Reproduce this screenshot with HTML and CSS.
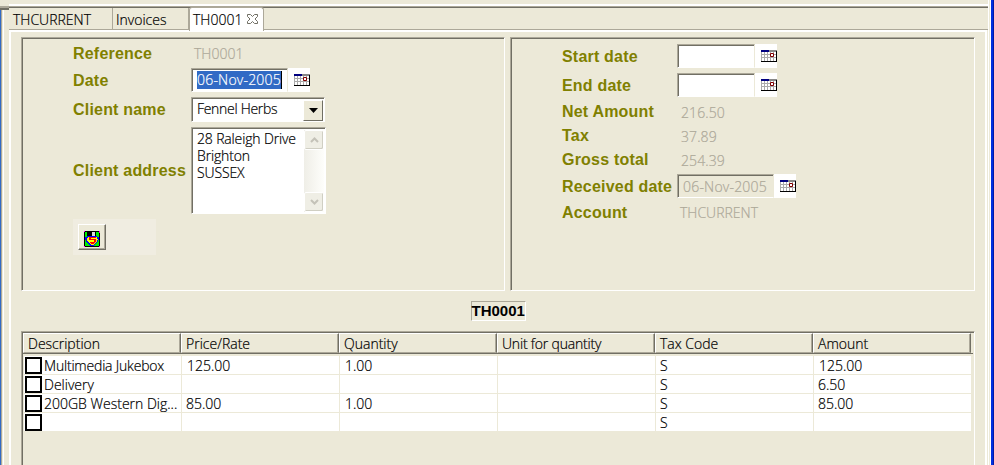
FILE: index.html
```html
<!DOCTYPE html>
<html lang="en">
<head>
<meta charset="utf-8">
<title>TH0001</title>
<link rel="stylesheet" href="styles.css">
</head>
<body>
<svg class="defs" width="0" height="0" shape-rendering="crispEdges">
<symbol id="cal" viewBox="0 0 16 12">
<path fill="#fff" d="M0 0h16v12H0z"/>
<path stroke="#aaa" fill="none" d="M.5 2v9M3.500 2v9M6.500 2v9M9.500 2v9M12.500 2v9M0 4.500h15M0 7.500h15"/>
<path fill="#000080" d="M0 0h8v2H0z"/><path fill="#888" d="M8 0h8v2H8z"/>
<path fill="#000" d="M15 1h1v11H0v-1h15z"/>
<path fill="#fff" stroke="#800000" d="M9.500 3.500h3v3h-3z"/>
</symbol>
</svg>
<div class="window">
<div class="edge-left"></div>
<main class="view">
<nav class="tabs">
<div class="tab t1"><span>THCURRENT</span></div>
<div class="tab t2"><span>Invoices</span></div>
<div class="tab active"><span>TH0001</span>
<svg width="11" height="10" viewBox="0 0 11 10"><path d="M.5.5h3l2 2 2-2h3v2L8 5l2.500 2.500v2h-3l-2-2-2 2h-3v-2L3 5 .5 2.500z" fill="#fff" stroke="#716f64"/></svg></div>
</nav>
<div class="editor">
<div class="panels">
<section class="panel left">
<div class="row r-ref"><label>Reference</label><span class="ro sp-ref">TH0001</span></div>
<div class="row r-date"><label class="low">Date</label><div class="date w-date"><div class="input"><span class="sel">06-Nov-2005</span></div><svg class="cal"><use href="#cal"/></svg></div></div>
<div class="row r-name"><label class="low">Client name</label><div class="combo"><span>Fennel Herbs</span><div class="drop"><svg width="9" height="5" viewBox="0 0 9 5"><path d="M0 0h9L4.500 5z"/></svg></div></div></div>
<div class="row r-addr"><label>Client address</label><div class="area"><div><p>28 Raleigh Drive</p><p>Brighton</p><p>SUSSEX</p></div>
<div class="scroll"><div class="sb"><svg width="9" height="6" viewBox="0 0 9 6"><path d="M1 5l3.500-3.500L8 5"/></svg></div><div class="sb"><svg width="9" height="6" viewBox="0 0 9 6"><path d="M1 1l3.500 3.500L8 1"/></svg></div></div></div></div>
<div class="toolbar"><button type="button"><svg width="16" height="16" viewBox="0 0 16 16" shape-rendering="crispEdges"><path fill="#000" d="M0 0h16v16H0z"/><path fill="#0e0" d="M1 1h14v14H1z"/><path fill="#000" d="M3 0h9v5H3z"/><path fill="#ddd" d="M8 1h3v4H8z"/><path fill="#00f" d="M3 5h10v1h2v3h-1v2h-1v1h-1v1h-1v1h-1v1H6v-1H5v-1H4v-1H3v-1H2V9H1V6h2z"/><path fill="#ff0" d="M4 6h9v2h1v1h-1v2h-1v1h-1v1h-1v1H7v-1H6v-1H5v-1H4v-1H3V7h1z"/><path fill="#f00" d="M5 6h7v1H7v1h5v3h-1v1h-1v1H7v-1H6v-1h4V9H5z"/><path fill="#f0f" d="M0 0h1v1H0zM15 0h1v2h-1zM0 15h1v1H0zM15 15h1v1h-1z"/></svg></button></div>
</section>
<section class="panel right">
<div class="row r-start"><label class="low">Start date</label><div class="date w-short"><div class="input"></div><svg class="cal"><use href="#cal"/></svg></div></div>
<div class="row r-end"><label class="low">End date</label><div class="date w-short"><div class="input"></div><svg class="cal"><use href="#cal"/></svg></div></div>
<div class="row r-txt"><label>Net Amount</label><span class="ro num">216.50</span></div>
<div class="row r-txt"><label>Tax</label><span class="ro num">37.89</span></div>
<div class="row r-txt"><label>Gross total</label><span class="ro num">254.39</span></div>
<div class="row r-rec"><label class="low">Received date</label><div class="date w-date"><div class="input off"><span>06-Nov-2005</span></div><svg class="cal"><use href="#cal"/></svg></div></div>
<div class="row r-txt r-acc"><label>Account</label><span class="ro acc">THCURRENT</span></div>
</section>
</div>
<div class="caption"><span>TH0001</span></div>
<div class="grid">
<div class="head"><div>Description</div><div>Price/Rate</div><div>Quantity</div><div class="tight">Unit for quantity</div><div>Tax Code</div><div>Amount</div></div>
<div class="line"><div><i></i><span class="tight">Multimedia Jukebox</span></div><div><span class="in">125.00</span></div><div><span class="in">1.00</span></div><div></div><div>S</div><div><span class="in">125.00</span></div></div>
<div class="line"><div><i></i><span>Delivery</span></div><div></div><div></div><div></div><div>S</div><div>6.50</div></div>
<div class="line"><div><i></i><span>200GB Western Dig...</span></div><div>85.00</div><div><span class="in">1.00</span></div><div></div><div>S</div><div>85.00</div></div>
<div class="line"><div><i></i></div><div></div><div></div><div></div><div>S</div><div></div></div>
</div>
</div>
</main>
<div class="edge-right"></div>
</div>
</body>
</html>
```
FILE: styles.css
```css
* { box-sizing: border-box; }
body { margin: 0; background: #ece9d8; color: #000; font: 300 14px/17px "Open Sans", "DejaVu Sans", sans-serif; -webkit-text-stroke: .2px; overflow: hidden; }
.defs { display: block; height: 0; }
.window { height: 465px; display: grid; grid-template-columns: 9px 979px 6px; }
.edge-left { margin-top: 10px; background: linear-gradient(90deg, #316ac5 0 1px, #aca899 1px 2px, #ece9d8 2px 3px, #fff 3px 4px, #ece9d8 4px); box-shadow: 0 -2px #716f64, 0 -4px #aca899; }
.edge-right { background: linear-gradient(90deg, #fff 0 1px, #ece9d8 1px 2px, #fff 2px 3px, #0030e0 3px 5px, #0018a8 5px); }
.view { border-top: 2px solid #fff; margin-top: 4px; padding-top: 2px; background: linear-gradient(#aca899 0 1px, #716f64 1px 2px, transparent 2px); }
.tabs { height: 22px; display: flex; border-bottom: 1px solid #aca899; }
.tab { padding: 3px 0 0 4px; height: 21px; border-right: 1px solid #aca899; white-space: nowrap; }
.t1 { width: 104px; }
.t2 { width: 76px; padding-left: 3px; }
.active { width: 75px; height: 24px; padding-left: 3px; background: #fff; border: 1px solid #aca899; border-bottom: 0; border-radius: 3px 3px 0 0; display: flex; justify-content: space-between; padding-right: 5px; margin-top: -1px; }
.active svg { margin-top: 3px; }
.editor { height: 435px; width: 978px; border: 2px solid #fff; border-bottom: 0; padding: 5px 10px 0 10px; }
.panels { display: grid; grid-template-columns: 484px 465px; gap: 5px; height: 254px; }
.panel, .grid, .input, .combo, .area { border: 1px solid; border-color: #aca899 #fff #fff #aca899; box-shadow: inset 1px 1px #716f64; }
.panel { padding-left: 51px; }
.row { display: flex; align-items: center; }
.row label { width: 118px; flex: none; font: bold 16px/18px "Liberation Sans", sans-serif; -webkit-text-stroke: 0; color: #808000; letter-spacing: .2px; white-space: nowrap; }
.right .row label { width: 115px; }
.row .low { padding-top: 2px; }
.ro { color: #aca899; }
.r-ref { height: 31px; }
.sp-ref { padding-left: 3px; }
.r-date { height: 22px; }
.r-name { height: 36px; }
.r-addr { height: 87px; }
.date { display: flex; height: 24px; background: #fff; align-items: center; }
.input { height: 24px; width: 97px; padding: 2px 0 0 5px; background: #fff; border-right-color: #ece9d8; letter-spacing: .2px; }
.w-date { width: 119px; }
.w-short { width: 100px; }
.w-short .input { width: 78px; }
.off { background: #ece9d8; color: #aca899; padding-top: 3px; }
.sel { display: inline-block; background: #316ac5; color: #fff; height: 18px; border-right: 1px solid #000; }
.cal { width: 16px; height: 12px; margin-left: 6px; }
.combo { width: 134px; height: 25px; background: #fff; display: flex; justify-content: space-between; padding: 2px 1px 1px 5px; letter-spacing: -.3px; }
.drop { width: 20px; height: 21px; background: #ece9d8; border: 1px solid; border-color: #fff #716f64 #716f64 #fff; display: grid; place-items: center; }
.area { width: 135px; height: 87px; background: #fff; display: flex; justify-content: space-between; padding: 2px 1px 1px 5px; letter-spacing: -.15px; }
.area p { margin: 0; white-space: nowrap; }
.scroll { width: 20px; display: flex; flex-direction: column; justify-content: space-between; background: linear-gradient(90deg, #efeee7, #fefefb); }
.sb { width: 20px; height: 20px; border: 1px solid #fff; border-radius: 2px; box-shadow: inset -1px -1px #d0cfc3; background: #efeee5; display: grid; place-items: center; }
.sb path { fill: none; stroke: #c4c2b8; stroke-width: 2; }
.toolbar { width: 83px; height: 36px; margin-top: 5px; padding: 5px; background: #f0ede1; }
.toolbar button { width: 28px; height: 26px; padding: 4px 0 0 5px; background: #ece9d8; border: 1px solid; border-color: #fff #716f64 #716f64 #fff; box-shadow: inset -1px -1px #aca899; display: block; }
.toolbar svg { display: block; }
.r-start { height: 35px; padding-top: 1px; }
.r-end { height: 24px; margin-bottom: 3px; }
.r-txt { height: 24px; }
.r-acc { padding-top: 1px; }
.num { padding-left: 4px; letter-spacing: .1px; }
.acc { padding-left: 3px; }
.r-rec { height: 28px; }
.caption { height: 40px; padding-top: 10px; display: flex; justify-content: center; }
.caption span { height: 20px; width: 55px; border: 1px solid; border-color: #aca899 #fff #fff #aca899; font: bold 15px/18px "Liberation Sans", sans-serif; -webkit-text-stroke: 0; text-align: center; }
.grid { width: 954px; height: 150px; border-bottom: 0; padding: 1px 1px 0 1px; }
.head, .line { display: grid; grid-template-columns: repeat(6, 158px); white-space: nowrap; }
.head { height: 21px; border-bottom: 1px solid #716f64; margin-bottom: 2px; }
.head div { padding: 1px 0 0 4px; border: 1px solid; border-color: #fff #716f64 #aca899 #fff; box-shadow: inset -1px 0 #aca899; }
.line { height: 19px; margin-left: 1px; }
.line div { background: #fff; border-right: 1px solid #ece9d8; border-bottom: 1px solid #ece9d8; padding: 1px 0 0 4px; display: flex; }
.line div:first-child { padding-left: 1px; }
.line i { flex: none; width: 17px; height: 17px; border: 2px solid #000; margin-right: 2px; }
.in { padding-left: 1px; }
.head .tight, .tight { letter-spacing: -.2px; }
```
